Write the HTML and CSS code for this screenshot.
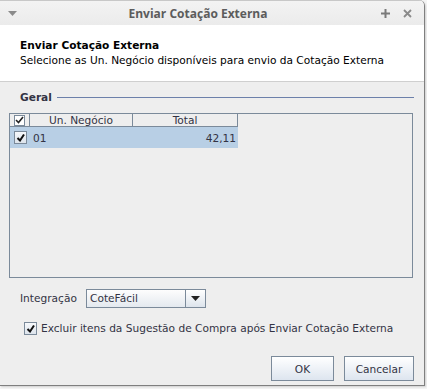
FILE: index.html
```html
<!DOCTYPE html>
<html>
<head>
<meta charset="utf-8">
<link rel="stylesheet" href="styles.css">
</head>
<body>
<div class="window">
  <div class="titlebar">
    <span class="tb-menu"><svg width="9" height="6" viewBox="0 0 9 6"><path d="M0 0H9L4.5 5Z" fill="#8a8a8a"/></svg></span>
    <span class="tb-title">Enviar Cotação Externa</span>
    <span class="tb-btns">
      <svg width="9" height="9" viewBox="0 0 9 9"><path d="M4.5 0V9M0 4.5H9" stroke="#7a7a7a" stroke-width="2"/></svg>
      <svg width="9" height="9" viewBox="0 0 9 9"><path d="M1 1L8 8M8 1L1 8" stroke="#8a8a8a" stroke-width="1.8"/></svg>
    </span>
  </div>
  <div class="header">
    <div class="h-title">Enviar Cotação Externa</div>
    <div class="h-sub">Selecione as Un. Negócio disponíveis para envio da Cotação Externa</div>
  </div>
  <div class="content">
    <div class="group">
      <span class="group-label">Geral</span>
      <span class="group-line"></span>
    </div>
    <div class="table">
      <div class="thead">
        <div class="th th-check"><span class="cb cb-small"><svg width="9" height="8" viewBox="0 0 9 8"><path d="M1 4L3.5 6.5L8 1" stroke="#222" stroke-width="1.6" fill="none"/></svg></span></div>
        <div class="th th-un">Un. Negócio</div>
        <div class="th th-total">Total</div>
      </div>
      <div class="row selected">
        <div class="td td-check"><span class="cb"><svg width="9" height="9" viewBox="0 0 9 9"><path d="M1.5 5L4 7.5L8 1.5" stroke="#111" stroke-width="2" fill="none"/></svg></span></div>
        <div class="td td-un">01</div>
        <div class="td td-total">42,11</div>
      </div>
    </div>
    <div class="integracao">
      <span class="int-label">Integração</span>
      <div class="combo">
        <span class="combo-text">CoteFácil</span>
        <span class="combo-btn"><svg width="9" height="5" viewBox="0 0 9 5"><path d="M0 0H9L4.5 5Z" fill="#222"/></svg></span>
      </div>
    </div>
    <div class="excluir">
      <span class="cb"><svg width="9" height="9" viewBox="0 0 9 9"><path d="M1.5 5L4 7.5L8 1.5" stroke="#111" stroke-width="2" fill="none"/></svg></span>
      <span class="excluir-text">Excluir itens da Sugestão de Compra após Enviar Cotação Externa</span>
    </div>
    <div class="buttons">
      <button class="btn btn-ok">OK</button>
      <button class="btn btn-cancel">Cancelar</button>
    </div>
  </div>
</div>
</body>
</html>
```

FILE: styles.css
```css
* { box-sizing: border-box; }
html, body { margin: 0; padding: 0; }
body {
  width: 427px;
  height: 389px;
  background: #f4f4f4;
  font-family: "DejaVu Sans", sans-serif;
  font-size: 10.6px;
  color: #333344;
  overflow: hidden;
}
.window {
  width: 425px;
  height: 386px;
  border-right: 1px solid #7f7f7f;
  border-bottom: 1px solid #7f7f7f;
  border-top-right-radius: 6px;
  display: flex;
  flex-direction: column;
  background: #eeeeee;
  overflow: hidden;
  box-shadow: 1px 1px 2px rgba(0,0,0,0.15);
}
.titlebar {
  height: 25px;
  flex: none;
  background: linear-gradient(#f3f3f3, #ebebeb);
  border-top: 1px solid #c8c8c8;
  display: flex;
  align-items: center;
}
.tb-menu {
  width: 9px;
  margin-left: 8px;
  display: flex;
  margin-top: 1px;
}
.tb-title {
  flex: 1;
  text-align: center;
  font-family: "Open Sans", "DejaVu Sans", sans-serif;
  font-weight: bold;
  font-size: 12px;
  color: #5c5c5c;
  margin-right: 2px;
}
.tb-btns {
  display: flex;
  gap: 13px;
  margin-right: 12px;
  align-items: center;
}
.header {
  height: 57px;
  flex: none;
  background: #ffffff;
  border-bottom: 1px solid #cfcfcf;
  padding: 13px 0 0 20px;
  color: #000;
  line-height: 15px;
}
.h-title { font-weight: bold; }
.content {
  flex: 1;
  padding: 0 0 0 9px;
  display: flex;
  flex-direction: column;
}
.group {
  display: flex;
  align-items: center;
  height: 16px;
  margin-top: 7px;
  margin-left: 11px;
  margin-right: 10px;
}
.group-label {
  font-weight: bold;
  color: #333344;
  margin-right: 5px;
}
.group-line {
  flex: 1;
  height: 1px;
  background: #6c80aa;
}
.table {
  margin-top: 8px;
  width: 404px;
  height: 165px;
  border: 1px solid #7b8a9a;
  background: #eeeeee;
}
.thead {
  display: flex;
  height: 13px;
}
.th {
  background: #eeeeee;
  border-right: 1px solid #7b8a9a;
  border-bottom: 1px solid #7b8a9a;
  text-align: center;
  line-height: 12px;
  color: #333344;
}
.th-check {
  width: 20px;
  display: flex;
  align-items: center;
  justify-content: center;
}
.th-un { width: 103px; }
.th-total { width: 105px; }
.row {
  display: flex;
  height: 21px;
  width: 228px;
  align-items: center;
}
.row.selected { background: #b8cfe5; }
.td { color: #333344; }
.td-check {
  width: 20px;
  display: flex;
  justify-content: center;
}
.td-un { width: 103px; padding-left: 3px; }
.td-total { width: 105px; text-align: right; padding-right: 2px; }
.cb {
  width: 13px;
  height: 13px;
  border: 1px solid #7b8a9a;
  background: linear-gradient(#f6f8fb, #dde4ec);
  display: inline-flex;
  align-items: center;
  justify-content: center;
}
.cb-small {
  width: 11px;
  height: 11px;
  background: #ffffff;
}
.integracao {
  display: flex;
  align-items: center;
  margin-top: 10px;
  margin-left: 11px;
  height: 20px;
}
.int-label { width: 66px; }
.combo {
  display: flex;
  width: 120px;
  height: 19px;
  border: 1px solid #7b8a9a;
}
.combo-text {
  flex: 1;
  background: linear-gradient(#fdfdfd, #e4e9ef);
  padding-left: 3px;
  line-height: 16px;
  color: #333344;
  border-right: 1px solid #7b8a9a;
}
.combo-btn {
  width: 19px;
  background: linear-gradient(#ffffff, #dde4ec);
  display: flex;
  align-items: center;
  justify-content: center;
}
.excluir {
  display: flex;
  align-items: center;
  margin-top: 13px;
  margin-left: 15px;
  height: 14px;
  gap: 4px;
}
.buttons {
  display: flex;
  justify-content: flex-end;
  gap: 10px;
  margin-top: 21px;
  margin-right: 10px;
}
.btn {
  height: 25px;
  border: 1px solid #7b8a9a;
  background: linear-gradient(#ffffff, #dde5ef);
  font-family: "DejaVu Sans", sans-serif;
  font-size: 10.6px;
  color: #333344;
  padding: 0;
  border-radius: 0;
}
.btn-ok { width: 63px; }
.btn-cancel { width: 70px; }
```
